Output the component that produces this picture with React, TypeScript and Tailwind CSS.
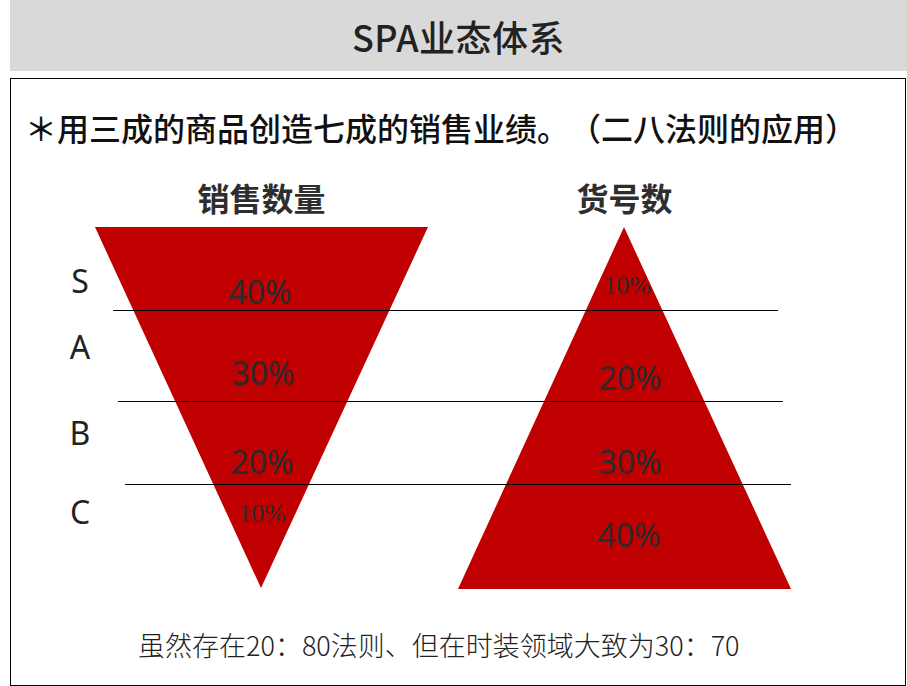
import React from 'react';

const cjk = "font-['Noto_Sans_CJK_SC','Noto_Sans',sans-serif]";
const latin = "font-['Noto_Sans','Noto_Sans_CJK_SC',sans-serif]";
const serif = "font-['Liberation_Serif','Times_New_Roman',serif]";

// étiquettes posées sur le schéma (coordonnées du canevas)
const pin = 'absolute -translate-x-1/2 -translate-y-1/2 leading-none whitespace-nowrap';

const App = () => {
  return (
    <div className={`w-[907px] h-[686px] bg-white ${cjk} [text-spacing-trim:space-all]`}>
      {/* Bandeau titre */}
      <div className="ml-[10px] h-[71px] bg-[#d9d9d9] flex items-center justify-center">
        <h1 className="text-[36px] leading-none font-medium text-[#222] tracking-[0.5px]">SPA业态体系</h1>
      </div>

      {/* Cadre principal */}
      <div className="mt-[7px] ml-[10px] w-[896px] h-[608px] border border-black flex flex-col">
        <p className="mt-[28px] pl-[14px] text-[32px] leading-[40px] font-medium text-[#111] whitespace-nowrap">
          ＊用三成的商品创造七成的销售业绩。（二八法则的应用）
        </p>

        {/* Titres des deux colonnes */}
        <div className="mt-[30px] pl-[84px] flex gap-[30px]">
          <h2 className="w-[333px] text-center text-[32px] leading-[40px] font-bold text-[#2e2e2e]">销售数量</h2>
          <h2 className="w-[333px] text-center text-[32px] leading-[40px] font-bold text-[#2e2e2e]">货号数</h2>
        </div>

        {/* Schéma des deux triangles */}
        <div className="relative h-[383px] w-full">
          <svg className="absolute inset-0" width="894" height="383" viewBox="0 0 894 383">
            <polygon points="84,10 417,10 250,371" fill="#c00000" />
            <polygon points="613,10 780,372 447,372" fill="#c00000" />
            <line x1="102" y1="93.5" x2="767" y2="93.5" stroke="#000" strokeWidth="1" />
            <line x1="107" y1="184.5" x2="772" y2="184.5" stroke="#000" strokeWidth="1" />
            <line x1="114" y1="267.5" x2="780" y2="267.5" stroke="#000" strokeWidth="1" />
          </svg>

          {/* Rangs */}
          <span className={`${pin} left-[69px] top-[64px] text-[32px] text-[#222] ${latin}`}>S</span>
          <span className={`${pin} left-[69px] top-[130px] text-[32px] text-[#222] ${latin}`}>A</span>
          <span className={`${pin} left-[69px] top-[216px] text-[32px] text-[#222] ${latin}`}>B</span>
          <span className={`${pin} left-[69px] top-[295px] text-[32px] text-[#222] ${latin}`}>C</span>

          {/* Pourcentages - ventes */}
          <span className={`${pin} left-[249px] top-[75px] text-[32px] text-[#2b2b2b] ${latin}`}>40%</span>
          <span className={`${pin} left-[252px] top-[156px] text-[32px] text-[#2b2b2b] ${latin}`}>30%</span>
          <span className={`${pin} left-[251px] top-[245px] text-[32px] text-[#2b2b2b] ${latin}`}>20%</span>
          <span className={`${pin} left-[251px] top-[297px] text-[26px] text-[#2b2b2b] ${serif}`}>10%</span>

          {/* Pourcentages - références */}
          <span className={`${pin} left-[616px] top-[69px] text-[26px] text-[#2b2b2b] ${serif}`}>10%</span>
          <span className={`${pin} left-[619px] top-[161px] text-[32px] text-[#2b2b2b] ${latin}`}>20%</span>
          <span className={`${pin} left-[619px] top-[245px] text-[32px] text-[#2b2b2b] ${latin}`}>30%</span>
          <span className={`${pin} left-[618px] top-[318px] text-[32px] text-[#2b2b2b] ${latin}`}>40%</span>
        </div>

        <p className="mt-[27px] pl-[127px] text-[27px] leading-[36px] font-light text-[#222] whitespace-nowrap">
          虽然存在20：80法则、但在时装领域大致为30：70
        </p>
      </div>
    </div>
  );
};

export default App;
